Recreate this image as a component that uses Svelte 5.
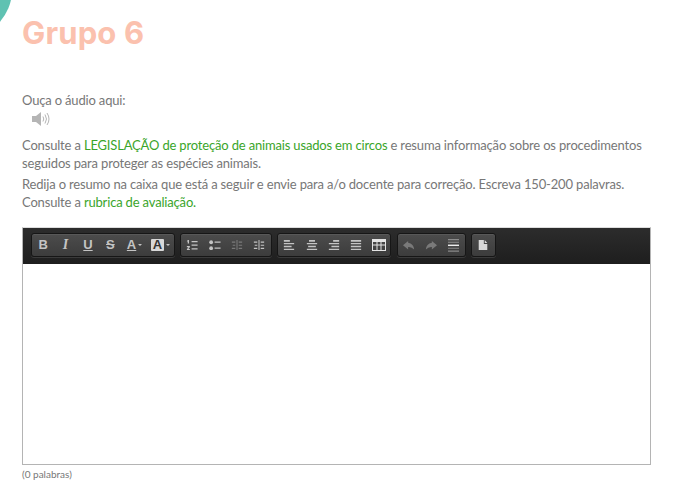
<script>
  const groups = [
    ['b','i','u','s','fc','bc'],
    ['ol','ul','out','in'],
    ['al','ac','ar','aj','table'],
    ['undo','redo','hr'],
    ['doc']
  ];
  const dim = new Set(['out','undo','redo']);
</script>

<div class="page">
  <div class="blob"></div>
  <h1>Grupo 6</h1>
  <p class="listen">Ouça o áudio aqui:</p>
  <div class="audio">
    <svg width="20" height="16" viewBox="0 0 20 16">
      <path d="M1 5h4l5-4v14l-5-4H1z" fill="#b5b5b5"/>
      <path d="M12 5.500q1.500 2.500 0 5M14 3.500q3 4.500 0 9M16 2q4 6 0 12" fill="none" stroke="#b5b5b5" stroke-width="1"/>
    </svg>
  </div>
  <p>Consulte a <span class="link">LEGISLAÇÃO de proteção de animais usados em circos</span> e resuma informação sobre os procedimentos seguidos para proteger as espécies animais.</p>
  <p>Redija o resumo na caixa que está a seguir e envie para a/o docente para correção. Escreva 150-200 palavras. Consulte a <span class="link">rubrica de avaliação.</span></p>

  <div class="editor">
    <div class="toolbar">
      {#each groups as group}
        <div class="group">
          {#each group as b}
            <span class="btn {b}">
              {#if b === 'b'}<b class="t">B</b>
              {:else if b === 'i'}<i class="t serif">I</i>
              {:else if b === 'u'}<span class="t under">U</span>
              {:else if b === 's'}<span class="t strike">S</span>
              {:else if b === 'fc'}<span class="t under">A</span><span class="caret"></span>
              {:else if b === 'bc'}<span class="t box">A</span><span class="caret"></span>
              {:else if b === 'hr'}
                <svg class="tall" viewBox="0 0 12 14" fill="#c4c4c4">
                  <path d="M0 0h12v1.200H0zM0 3h12v1H0zM0 9.500h12v1H0zM0 12.500h12v1.200H0z" opacity=".55"/><path d="M0 6h12v1.600H0z" fill="#eee"/>
                </svg>
              {:else}
                <svg viewBox="0 0 14 12" fill="#c4c4c4" class:wide={b === 'table'} class:faded={dim.has(b)}>
                  {#if b === 'ol'}
                    <path d="M2 0h1.500v4H2V1.500H1zM1 7h3.500v1.200L2.800 10.500h1.700V12H1v-1.200l1.800-2.400H1z"/><path d="M6.500 1h7v1.500h-7zM6.500 5.200h7v1.500h-7zM6.500 9.500h7V11h-7z"/>
                  {:else if b === 'ul'}
                    <circle cx="2.500" cy="2.500" r="2.200"/><circle cx="2.500" cy="9.500" r="2.200"/><path d="M6.500 1.500h7V3h-7zM6.500 8.500h7V10h-7z"/>
                  {:else if b === 'out' || b === 'in'}
                    <path d="M1 1.500h4V3H1zM2 5.300h3v1.400H2zM1 9h4v1.500H1zM9 1.500h4V3H9zM9 5.300h4v1.400H9zM9 9h4v1.500H9zM6.400 0h1.200v12H6.400z"/>
                  {:else if b === 'al'}
                    <path d="M1 0h7v2H1zM1 3.300h12v1.600H1zM1 6.600h9v1.600H1zM1 10h12v2H1z"/>
                  {:else if b === 'ac'}
                    <path d="M3.500 0h7v2h-7zM1 3.300h12v1.600H1zM2.500 6.600h9v1.600h-9zM1 10h12v2H1z"/>
                  {:else if b === 'ar'}
                    <path d="M6 0h7v2H6zM1 3.300h12v1.600H1zM4 6.600h9v1.600H4zM1 10h12v2H1z"/>
                  {:else if b === 'aj'}
                    <path d="M1 0h12v2H1zM1 3.300h12v1.600H1zM1 6.600h12v1.600H1zM1 10h12v2H1z"/>
                  {:else if b === 'table'}
                    <path fill-rule="evenodd" d="M0 0h14v12H0zM1 3v2.500h3.500V3zM5.500 3v2.500h3V3zM9.500 3v2.500H13V3zM1 6.500V11h3.500V6.500zM5.500 6.500V11h3V6.500zM9.500 6.500V11H13V6.500z" fill="#e4e4e4"/>
                  {:else if b === 'undo'}
                    <path d="M6 1L0 6l6 5V8q4-.5 7 3-.5-7-7-8z"/>
                  {:else if b === 'redo'}
                    <path d="M8 1l6 5-6 5V8q-4-.5-7 3 .5-7 7-8z"/>
                  {:else if b === 'doc'}
                    <path fill-rule="evenodd" d="M2 0h6v4.500h4V12H2zM9 0l3 3.500H9z" fill="#d8d8d8"/>
                  {/if}
                </svg>
              {/if}
            </span>
          {/each}
        </div>
      {/each}
    </div>
    <div class="area"></div>
  </div>
  <div class="count">(0 palabras)</div>
</div>

<style>
  :global(body) { margin: 0; background: #fff; }
  .page {
    position: relative;
    height: 487px;
    overflow: hidden;
    box-sizing: border-box;
    padding: 0 35px 0 22px;
    font-family: Lato, "Liberation Sans", sans-serif;
    font-size: 13px;
    letter-spacing: -0.17px;
    line-height: 18px;
    color: #777;
  }
  .blob {
    position: absolute;
    left: -84px;
    top: -58px;
    width: 96px;
    height: 96px;
    border-radius: 50%;
    background: #5fc2b2;
  }
  h1 {
    position: relative;
    margin: 0;
    padding-top: 14px;
    height: 77px;
    box-sizing: border-box;
    font-family: Inter, sans-serif;
    font-size: 31px;
    letter-spacing: 0.15px;
    line-height: 38px;
    font-weight: 700;
    color: #fbc1ae;
  }
  p { margin: 0 0 3px; }
  .listen { padding-top: 14px; margin: 0; }
  .audio { height: 25px; padding-left: 9px; }
  .audio svg { display: block; margin-top: 2px; }
  .link { color: #3aa52a; }
  .editor {
    margin-top: 16px;
    width: 629px;
    box-sizing: border-box;
    border: 1px solid #b4b4b4;
    border-top-color: #ddd;
  }
  .toolbar {
    display: flex;
    gap: 5.500px;
    height: 36px;
    box-sizing: border-box;
    padding: 5px 8px;
    background: linear-gradient(#2c2c2c, #1e1e1e);
  }
  .group {
    display: flex;
    align-items: center;
    height: 24px;
    box-sizing: border-box;
    border: 1px solid #161616;
    border-radius: 3px;
    background: linear-gradient(#4c4c4c, #3c3c3c);
    box-shadow: inset 0 1px 0 #585858, 0 1px 0 #3a3a3a;
  }
  .btn {
    display: flex;
    align-items: center;
    justify-content: center;
    width: 22.400px;
    height: 100%;
    color: #c4c4c4;
    font-size: 13px;
    letter-spacing: 0;
    line-height: 14px;
  }
  .btn svg { width: 12px; height: 10.500px; }
  .btn svg.wide { width: 14px; height: 12px; }
  .btn svg.tall { width: 11px; height: 13px; }
  .btn svg.faded { opacity: .42; }
  .btn.fc, .btn.bc { width: 26px; gap: 2px; }
  .t { font-family: "Liberation Sans", sans-serif; font-weight: 700; }
  .serif { font-family: "Liberation Serif", serif; font-size: 14px; }
  .under { text-decoration: underline; }
  .strike { text-decoration: line-through; }
  .box {
    background: #d8d8d8;
    color: #333;
    padding: 0 2px;
    border-radius: 1px;
    line-height: 12px;
  }
  .caret {
    width: 0;
    border-top: 2px solid #c4c4c4;
    border-left: 2px solid transparent;
    border-right: 2px solid transparent;
  }
  .area { height: 200px; background: #fff; }
  .count {
    margin-top: 2px;
    font-size: 10px;
    letter-spacing: 0;
    line-height: 14px;
    color: #777;
  }
</style>
